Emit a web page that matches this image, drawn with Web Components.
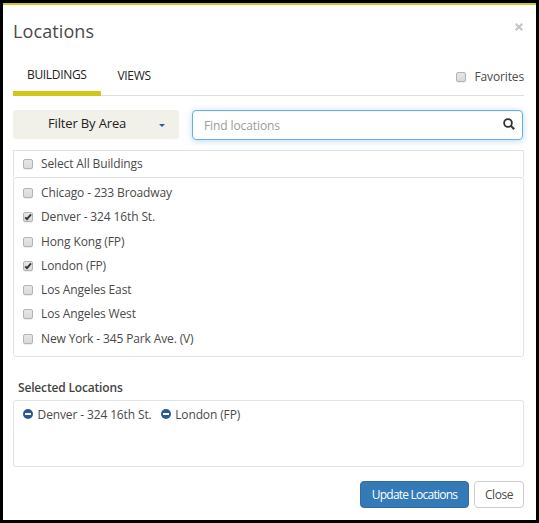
<!DOCTYPE html>
<html lang="en">
<head>
<meta charset="utf-8">
<title>Locations</title>
<style>
html,body{margin:0;height:100%;overflow:hidden;background:#000}
body{font-family:"Open Sans","Noto Sans",sans-serif;font-size:12px;font-weight:400;color:#4a4a4a}
</style>
</head>
<body>
<locations-dialog></locations-dialog>
<script>
function define(name, html) {
  const template = document.createElement('template');
  template.innerHTML = html;
  customElements.define(name, class extends HTMLElement {
    constructor() {
      super();
      this.attachShadow({ mode: 'open' }).appendChild(template.content.cloneNode(true));
    }
  });
}

define('check-item', `
<style>
:host{display:flex;align-items:center;height:24.25px;white-space:nowrap;line-height:18px;letter-spacing:-.13px}
i{box-sizing:border-box;width:10px;height:10px;border:1px solid #b4b4b4;border-radius:2px;background:linear-gradient(#e6e6e6,#dadada);margin-right:8px;flex:none;display:block;box-shadow:0 1px 0 #eee}
svg{display:none;width:10px;height:10px;margin:-1px;overflow:visible}
:host([checked]) svg{display:block}
</style>
<i><svg viewBox="0 0 10 10"><path d="M2.2 5.3 4 7.1 8 2.4" fill="none" stroke="#333" stroke-width="1.9"/></svg></i><slot></slot>`);

define('tab-item', `
<style>
:host{display:block;box-sizing:border-box;height:40px;padding:11px 13px 0 14px;line-height:18px;color:#222;white-space:nowrap;letter-spacing:-.33px}
:host([active]){padding-top:10px;width:88px;border-bottom:5px solid #d3c61a}
:host(:not([active])){padding-left:16.5px}
</style><slot></slot>`);

define('filter-button', `
<style>
:host{display:flex;box-sizing:border-box;width:166px;height:29px;background:#f1f1e9;border-radius:3px;padding:0 14px 2px 35px;align-items:center;justify-content:space-between;color:#222;font-size:13px;white-space:nowrap;letter-spacing:-.15px}
span{margin-top:-1px}
svg{width:6px;height:3px;margin-top:4px}
</style><span><slot></slot></span><svg viewBox="0 0 6 3"><path d="M0 0H6L3 3Z" fill="#2a5b97"/></svg>`);

define('search-field', `
<style>
:host{display:flex;box-sizing:border-box;width:331px;height:30px;border:1px solid #66afe9;border-radius:4px;box-shadow:inset 0 1px 1px rgba(0,0,0,.05),0 1px 6px rgba(102,175,233,.45);padding:1px 7px 0 11px;align-items:center;justify-content:space-between;color:#9b9b9b;letter-spacing:-.1px}
svg{width:12px;height:12px;margin-top:-4px}
</style><span><slot></slot></span><svg viewBox="0 0 12 12"><circle cx="5" cy="5" r="3.9" fill="none" stroke="#333" stroke-width="1.8"/><path d="M7.8 7.8 11.2 11.2" stroke="#333" stroke-width="2"/></svg>`);

define('selected-item', `
<style>
:host{display:flex;align-items:center;white-space:nowrap;line-height:18px;letter-spacing:-.13px}
svg{width:10px;height:10px;margin:-2px 4.6px 0 0}
</style><svg viewBox="0 0 10 10"><circle cx="5" cy="5" r="5" fill="#285a94"/><rect x="2" y="4" width="6" height="2" fill="#fff"/></svg><slot></slot>`);

define('push-button', `
<style>
:host{display:flex;box-sizing:border-box;height:27px;width:50px;border:1px solid #ccc;border-radius:4px;align-items:center;justify-content:center;padding-bottom:1px;background:#fff;white-space:nowrap;letter-spacing:-.45px}
:host([primary]){width:109px;background:#337ab7;border-color:#2e6da4;color:#fff;letter-spacing:-.77px}
</style><span><slot></slot></span>`);

define('locations-dialog', `
<style>
:host{display:block;box-sizing:border-box;width:539px;height:523px;border:3px solid #000;background:#fff;overflow:hidden}
main{box-sizing:border-box;height:517px;border-top:2px solid #d3c61a;padding:0 12px 0 10px;display:flex;flex-direction:column}
header{display:flex;justify-content:space-between;height:51px;box-sizing:border-box;padding-top:13px}
h1{margin:0;font-size:18px;font-weight:400;line-height:26px;letter-spacing:.1px}
header svg{width:8px;height:8px;margin:5px 1px 0 0}
nav{display:flex;height:40px;box-sizing:border-box;box-shadow:inset 0 -1px #ddd}
nav check-item{margin:9px 0 0 auto}
.tools{display:flex;justify-content:space-between;padding:14px 1px 10px 0;height:30px}
.all{box-sizing:border-box;height:27px;border:1px solid #e3e3e3;border-bottom:0;padding:1px 9px 0}
.list{box-sizing:border-box;height:180px;border:1px solid #e3e3e3;border-radius:3px;padding:3px 9px}
h2{font-size:12px;font-weight:600;color:#444;line-height:18px;margin:22px 0 3px 5px;letter-spacing:-.17px}
.chosen{box-sizing:border-box;height:67px;border:1px solid #e3e3e3;border-radius:3px;padding:5px 9px;display:flex;align-items:flex-start;gap:9px}
footer{display:flex;justify-content:flex-end;gap:5px;margin-top:14px}
</style>
<main>
<header><h1>Locations</h1><svg viewBox="0 0 8 8"><path d="M.7.7 7.3 7.3M7.3.7.7 7.3" stroke="#c4c4c4" stroke-width="2"/></svg></header>
<nav><tab-item active>BUILDINGS</tab-item><tab-item>VIEWS</tab-item><check-item>Favorites</check-item></nav>
<div class="tools"><filter-button>Filter By Area</filter-button><search-field>Find locations</search-field></div>
<div class="all"><check-item>Select All Buildings</check-item></div>
<div class="list"><check-item>Chicago - 233 Broadway</check-item><check-item checked>Denver - 324 16th St.</check-item><check-item>Hong Kong (FP)</check-item><check-item checked>London (FP)</check-item><check-item>Los Angeles East</check-item><check-item>Los Angeles West</check-item><check-item>New York - 345 Park Ave. (V)</check-item></div>
<h2>Selected Locations</h2>
<div class="chosen"><selected-item>Denver - 324 16th St.</selected-item><selected-item>London (FP)</selected-item></div>
<footer><push-button primary>Update Locations</push-button><push-button>Close</push-button></footer>
</main>`);
</script>
</body>
</html>
